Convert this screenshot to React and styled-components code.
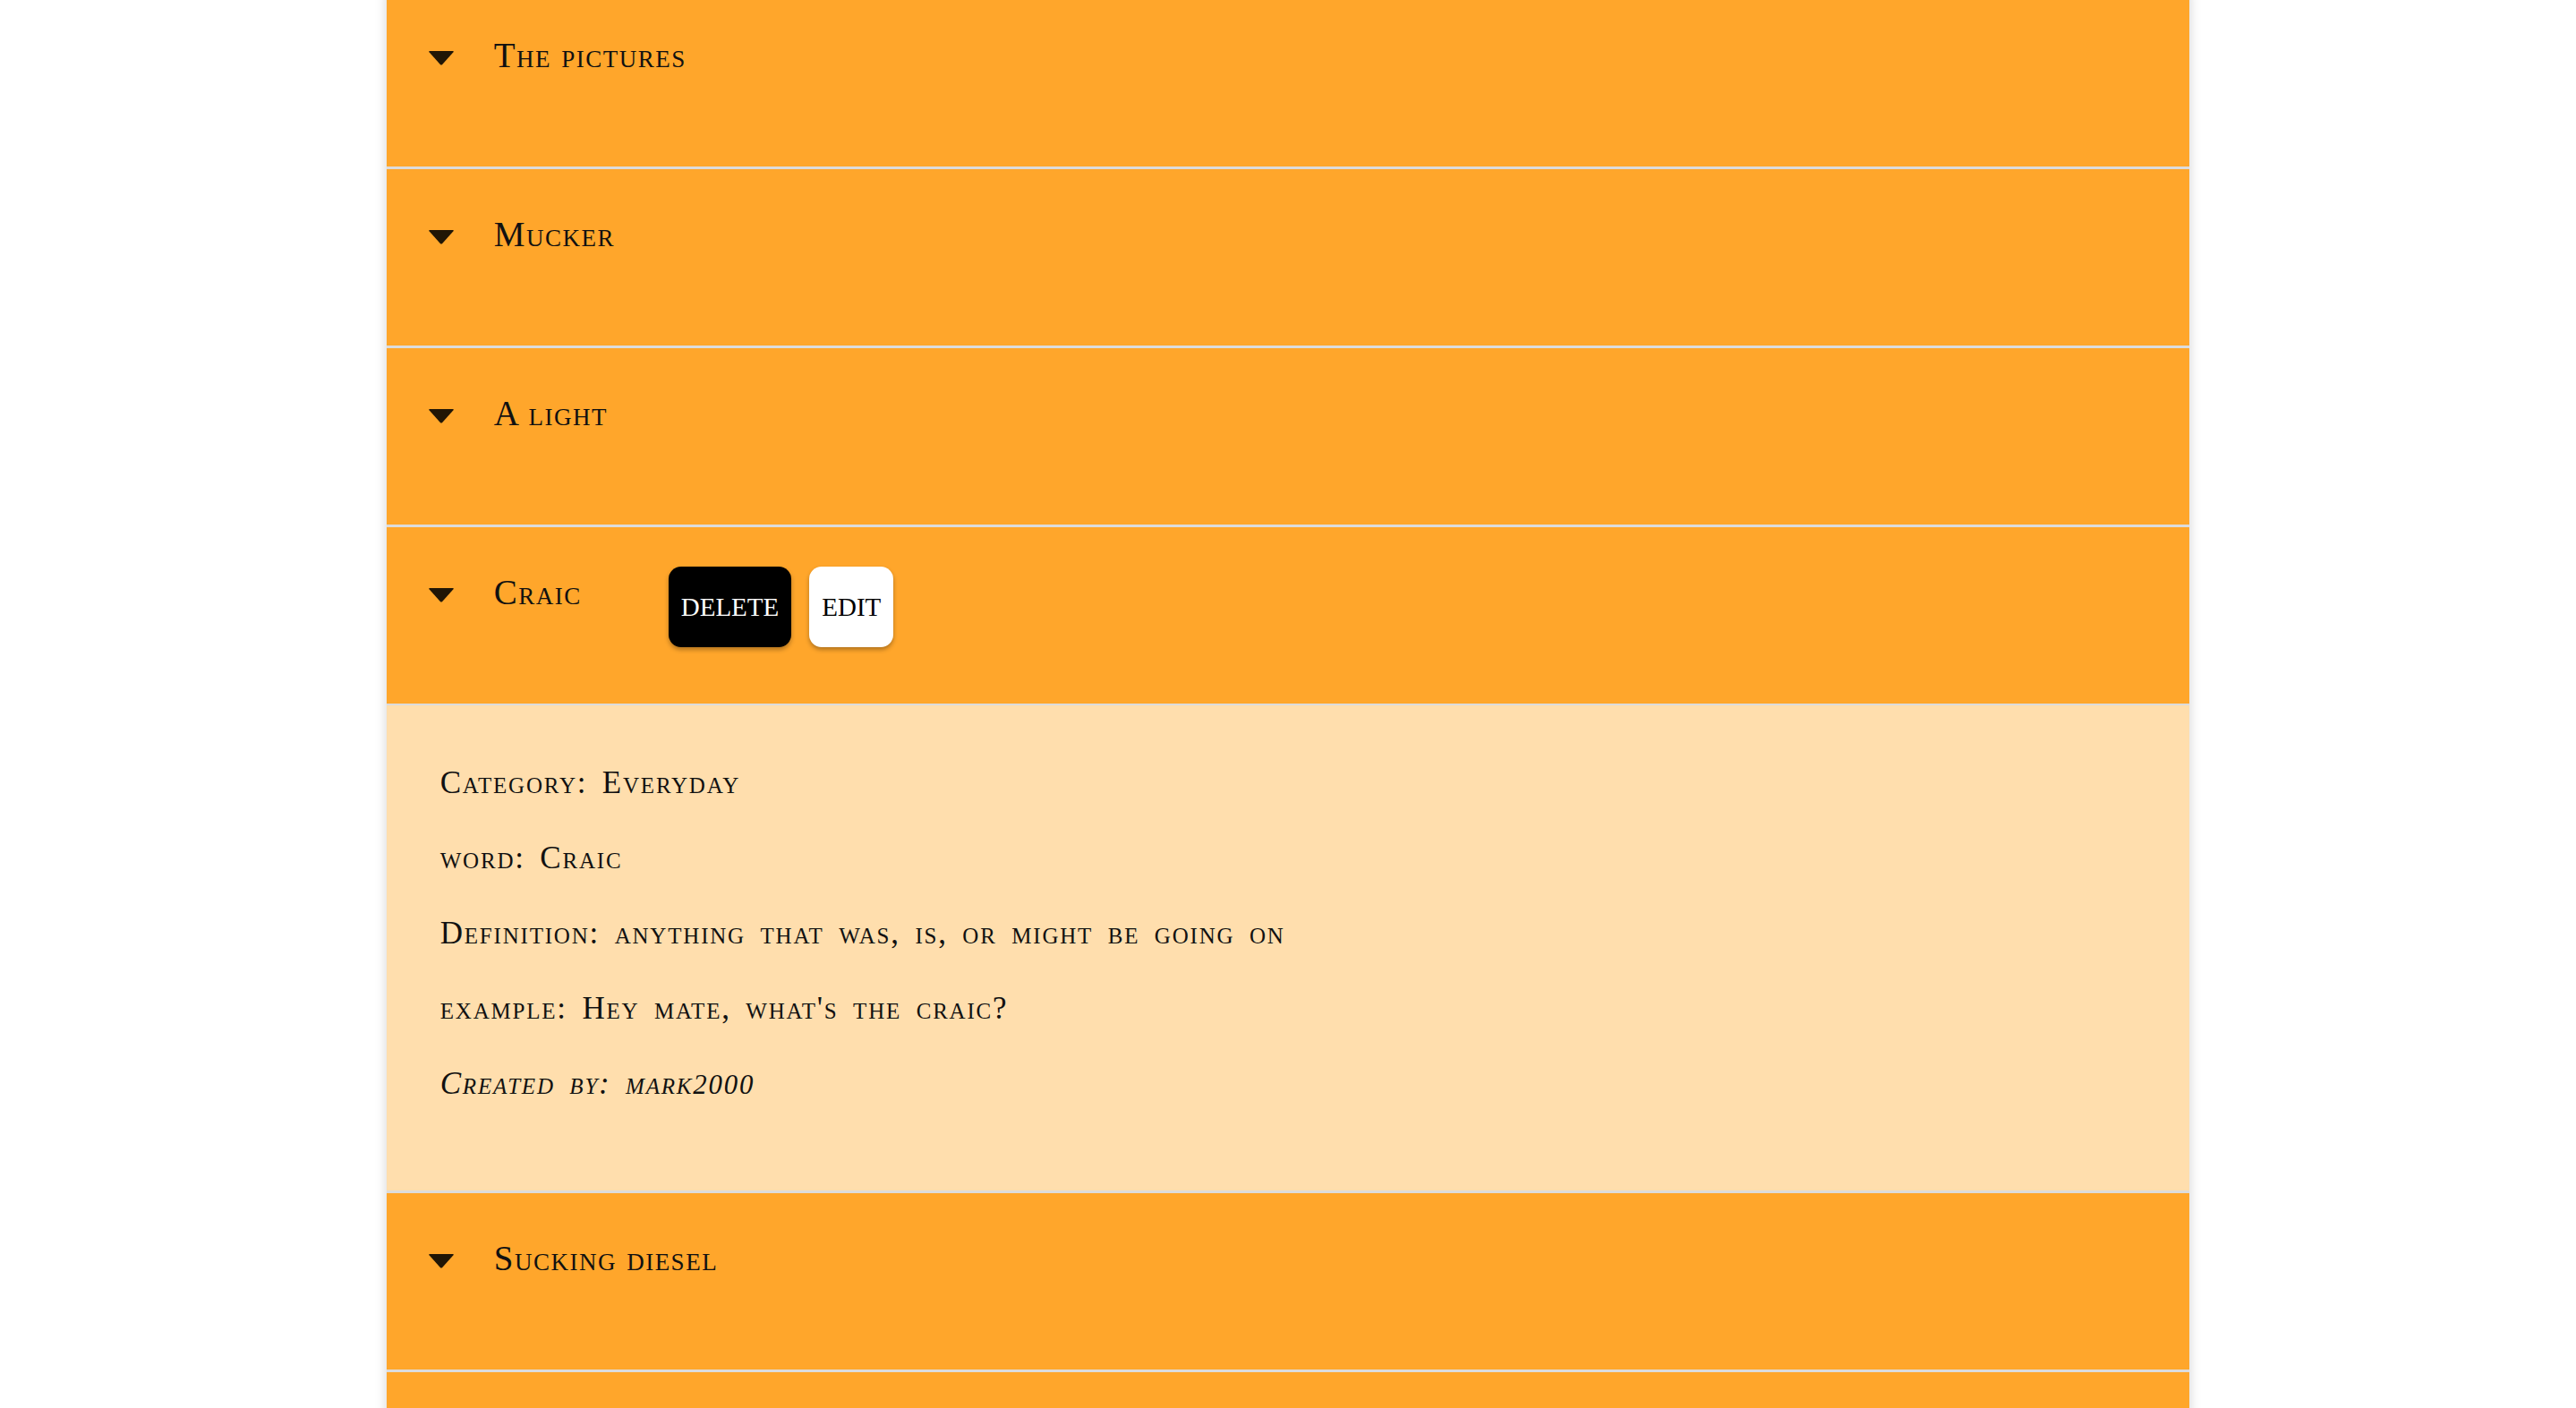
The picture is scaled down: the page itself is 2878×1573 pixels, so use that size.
import React from 'react'
import styled, { createGlobalStyle } from 'styled-components'

const GlobalStyle = createGlobalStyle`
    body {
        margin: 0;
        background: #ffffff;
        font-family: "Liberation Serif", "Times New Roman", serif;
        color: rgba(0, 0, 0, 0.87);
    }
`

const List = styled.div`
    width: 70%;
    margin: -11px auto 0;
    box-shadow: 0 0 12px rgba(0, 0, 0, 0.18);
`

const Item = styled.div`
    border-bottom: 3px solid #dcdcdc;
`

const Header = styled.div`
    height: 197px;
    box-sizing: border-box;
    display: flex;
    align-items: flex-start;
    padding: 44px 0 0 47px;
    background: #ffa62b;
`

const Caret = styled.svg`
    width: 28px;
    height: 16px;
    margin-top: 24px;
    flex-shrink: 0;
`

const Title = styled.h3`
    margin: 7px 0 0 45px;
    font-size: 39px;
    line-height: 44px;
    font-weight: 400;
    font-variant: small-caps;
    letter-spacing: 1.5px;
    color: #111111;
`

const Actions = styled.div`
    display: flex;
    gap: 20px;
    margin-left: 97px;
`

const Button = styled.button`
    height: 90px;
    padding: 0 14px;
    border: none;
    border-radius: 14px;
    font-family: "Liberation Serif", "Times New Roman", serif;
    font-size: 29px;
    background: ${props => props.dark ? '#000000' : '#ffffff'};
    color: ${props => props.dark ? '#ffffff' : '#000000'};
    box-shadow: 0 3px 5px rgba(0, 0, 0, 0.3);
    cursor: pointer;
`

const Panel = styled.div`
    display: flex;
    flex-direction: column;
    gap: 44px;
    padding: 67px 60px 98px;
    background: #ffdead;
    border-top: 2px solid #dcdcdc;
`

const Line = styled.p`
    margin: 0;
    font-size: 35px;
    line-height: 40px;
    font-variant: small-caps;
    font-style: ${props => props.italic ? 'italic' : 'normal'};
    letter-spacing: 1.8px;
    word-spacing: 6px;
    color: #111111;
`

// old style figures, a little lower than the capitals
const Figures = styled.span`
    font-size: 0.88em;
`

const words = [
    { title: 'The pictures' },
    { title: 'Mucker' },
    { title: 'A light' },
    {
        title: 'Craic',
        open: true,
        category: 'Everyday',
        definition: 'anything that was, is, or might be going on',
        example: "Hey mate, what's the craic?",
        author: 'mark',
        authorNumber: '2000',
    },
    { title: 'Sucking diesel' },
    { title: 'Grand' },
]

function Word({ word }) {
    return (
        <Item>
            <Header>
                <Caret viewBox="0 0 28 16">
                    <path d="M1 0 H27 Q28.5 0 27.5 1.2 L15.2 15 Q14 16.2 12.8 15 L0.5 1.2 Q-0.5 0 1 0 Z" fill="currentColor" />
                </Caret>
                <Title>{word.title}</Title>

                {/* only the open word shows its buttons */}
                {word.open &&
                    <Actions>
                        <Button dark>DELETE</Button>
                        <Button>EDIT</Button>
                    </Actions>
                }
            </Header>

            {word.open &&
                <Panel>
                    <Line>Category: {word.category}</Line>
                    <Line>word: {word.title}</Line>
                    <Line>Definition: {word.definition}</Line>
                    <Line>example: {word.example}</Line>
                    <Line italic>Created by: {word.author}<Figures>{word.authorNumber}</Figures></Line>
                </Panel>
            }
        </Item>
    )
}

export default function App() {
    return (
        <>
            <GlobalStyle />
            <List>
                {words.map(word => <Word key={word.title} word={word} />)}
            </List>
        </>
    )
}
